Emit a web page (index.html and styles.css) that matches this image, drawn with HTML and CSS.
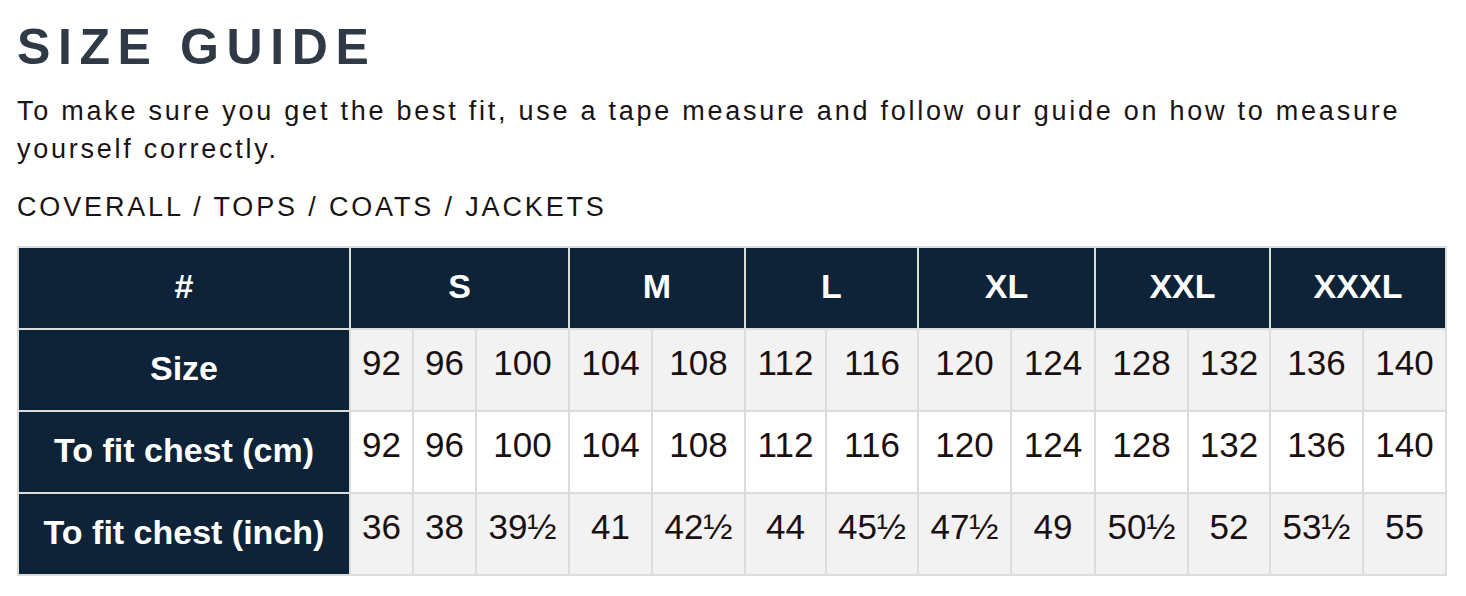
FILE: index.html
```html
<!DOCTYPE html>
<html lang="en">
<head>
<meta charset="utf-8">
<title>Size Guide</title>
<link rel="stylesheet" href="styles.css">
</head>
<body>
<main class="page">
  <h1 class="title">SIZE GUIDE</h1>
  <p class="intro">To make sure you get the best fit, use a tape measure and follow our guide on how to measure yourself correctly.</p>
  <p class="category">COVERALL / TOPS / COATS / JACKETS</p>
  <div class="chart">
    <div class="cell head">#</div>
    <div class="cell head span3">S</div>
    <div class="cell head span2">M</div>
    <div class="cell head span2">L</div>
    <div class="cell head span2">XL</div>
    <div class="cell head span2">XXL</div>
    <div class="cell head span2">XXXL</div>

    <div class="cell head">Size</div>
    <div class="cell data shade">92</div>
    <div class="cell data shade">96</div>
    <div class="cell data shade">100</div>
    <div class="cell data shade">104</div>
    <div class="cell data shade">108</div>
    <div class="cell data shade">112</div>
    <div class="cell data shade">116</div>
    <div class="cell data shade">120</div>
    <div class="cell data shade">124</div>
    <div class="cell data shade">128</div>
    <div class="cell data shade">132</div>
    <div class="cell data shade">136</div>
    <div class="cell data shade">140</div>

    <div class="cell head">To fit chest (cm)</div>
    <div class="cell data">92</div>
    <div class="cell data">96</div>
    <div class="cell data">100</div>
    <div class="cell data">104</div>
    <div class="cell data">108</div>
    <div class="cell data">112</div>
    <div class="cell data">116</div>
    <div class="cell data">120</div>
    <div class="cell data">124</div>
    <div class="cell data">128</div>
    <div class="cell data">132</div>
    <div class="cell data">136</div>
    <div class="cell data">140</div>

    <div class="cell head">To fit chest (inch)</div>
    <div class="cell data shade">36</div>
    <div class="cell data shade">38</div>
    <div class="cell data shade">39½</div>
    <div class="cell data shade">41</div>
    <div class="cell data shade">42½</div>
    <div class="cell data shade">44</div>
    <div class="cell data shade">45½</div>
    <div class="cell data shade">47½</div>
    <div class="cell data shade">49</div>
    <div class="cell data shade">50½</div>
    <div class="cell data shade">52</div>
    <div class="cell data shade">53½</div>
    <div class="cell data shade">55</div>
  </div>
</main>
</body>
</html>
```

FILE: styles.css
```css
html, body {
  margin: 0;
  padding: 0;
  background: #ffffff;
}

.page {
  padding: 22px 17px 0 17px;
  font-family: "Liberation Sans", Arial, sans-serif;
  color: #1a1314;
}

.title {
  margin: 0;
  font-size: 50px;
  line-height: 50px;
  font-weight: 700;
  letter-spacing: 7.6px;
  color: #2f3a46;
}

.intro {
  margin: 20px 0 0 0;
  max-width: 1420px;
  font-size: 27px;
  line-height: 38px;
  letter-spacing: 2.75px;
}

.category {
  margin: 20px 0 0 0;
  font-size: 27px;
  line-height: 38px;
  letter-spacing: 2.85px;
}

.chart {
  margin-top: 20px;
  display: grid;
  grid-template-columns: 330px 61px 61px 91px 81px 91px 79px 90px 91px 82px 91px 80px 91px 81px;
  grid-auto-rows: 80px;
  gap: 2px;
  padding: 2px;
  background: #dcdcdc;
  width: max-content;
}

.cell {
  display: flex;
  justify-content: center;
  box-sizing: border-box;
  white-space: nowrap;
}

.head {
  align-items: center;
  padding-bottom: 4px;
  background: #0e2338;
  color: #ffffff;
  font-weight: 700;
  font-size: 34px;
  line-height: 40px;
}

.span2 {
  grid-column: span 2;
}

.span3 {
  grid-column: span 3;
}

.data {
  align-items: flex-start;
  padding-top: 13px;
  background: #ffffff;
  color: #1a1011;
  font-size: 35px;
  line-height: 40px;
}

.shade {
  background: #f2f2f2;
}
```
